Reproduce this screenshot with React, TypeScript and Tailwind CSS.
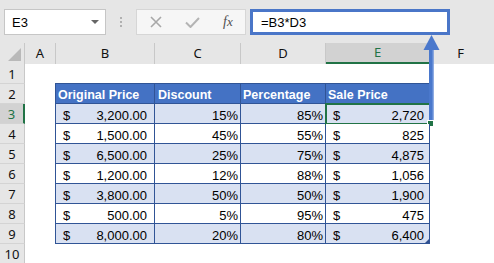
import React from "react";

const rows = [
  { o: "3,200.00", d: "15%", p: "85%", s: "2,720" },
  { o: "1,500.00", d: "45%", p: "55%", s: "825" },
  { o: "6,500.00", d: "25%", p: "75%", s: "4,875" },
  { o: "1,200.00", d: "12%", p: "88%", s: "1,056" },
  { o: "3,800.00", d: "50%", p: "50%", s: "1,900" },
  { o: "500.00", d: "5%", p: "95%", s: "475" },
  { o: "8,000.00", d: "20%", p: "80%", s: "6,400" },
];

const hdrFont = "font-['Noto_Sans','Liberation_Sans',sans-serif]";

function RowHeader({ n, active }: { n: number; active?: boolean }) {
  return (
    <div
      className={
        "w-[25px] h-full flex items-center justify-center text-[13px] font-normal border-b border-[#d4d4d4] " +
        hdrFont +
        (active
          ? " bg-[#d2d2d2] text-[#217346] border-r-2 border-r-[#217346]"
          : " bg-[#e6e6e6] text-[#111] border-r border-r-[#c8c8c8]")
      }
    >
      <span className="leading-none pt-[1px]">{n}</span>
    </div>
  );
}

export default function App() {
  return (
    <div className="w-[494px] h-[263px] overflow-hidden bg-white relative font-['Liberation_Sans',Arial,sans-serif] text-black">
      {/* top formula bar */}
      <div className="h-[43px] bg-[#e6e6e6] flex items-start pt-[9px] pl-[4px]">
        <div className="w-[102px] h-[26px] bg-white border border-[#c6c6c6] flex items-center justify-between pl-[7px] pr-[6px]">
          <span className="text-[13px] leading-none">E3</span>
          <svg width="8" height="4" viewBox="0 0 8 4">
            <polygon points="0,0 8,0 4,4" fill="#666" />
          </svg>
        </div>
        <div className="ml-[14px] mt-[8px] flex flex-col gap-[2px]">
          <div className="w-[2px] h-[2px] bg-[#b0b0b0]" />
          <div className="w-[2px] h-[2px] bg-[#b0b0b0]" />
          <div className="w-[2px] h-[2px] bg-[#b0b0b0]" />
        </div>
        <div className="ml-[14px] w-[110px] h-[26px] bg-[#f6f6f6] border border-[#d6d6d6] flex items-center">
          <svg className="ml-[13px]" width="12" height="12" viewBox="0 0 12 12">
            <path d="M1 1 L11 11 M11 1 L1 11" stroke="#a8a8a8" strokeWidth="1.6" />
          </svg>
          <svg className="ml-[23px]" width="15" height="11" viewBox="0 0 15 11">
            <path d="M1 5.5 L5.5 10 L14 1" stroke="#b4b4b4" strokeWidth="2" fill="none" />
          </svg>
          <span className="ml-[23px] text-[13px] italic text-[#505050] font-['Liberation_Serif',serif] leading-none">
            <span className="text-[14px]">f</span>x
          </span>
        </div>
        <div className="ml-[4px] w-[200px] h-[26px] bg-white border-[3px] border-[#4a76c8] flex items-center pl-[8px]">
          <span className="text-[13px] leading-none">=B3*D3</span>
        </div>
      </div>

      {/* column headers */}
      <div className={"h-[21px] flex bg-[#e6e6e6] text-[13px] text-[#111] " + hdrFont}>
        <div className="w-[25px] h-full border-r border-[#c8c8c8] flex items-end justify-end pr-[3px] pb-[3px]">
          <svg width="13" height="13" viewBox="0 0 13 13">
            <polygon points="13,0 13,13 0,13" fill="#b9b9b9" />
          </svg>
        </div>
        <div className="w-[31px] h-full border-r border-[#c8c8c8] flex items-center justify-center">A</div>
        <div className="w-[99px] h-full border-r border-[#c8c8c8] flex items-center justify-center">B</div>
        <div className="w-[86px] h-full border-r border-[#c8c8c8] flex items-center justify-center">C</div>
        <div className="w-[85px] h-full border-r border-[#c8c8c8] flex items-center justify-center">D</div>
        <div className="w-[104px] h-full bg-[#d2d2d2] border-r border-[#c8c8c8] border-b-2 border-b-[#217346] text-[#217346] flex items-center justify-center">
          E
        </div>
        <div className="flex-1 h-full flex items-center justify-center pr-[1px]">
          <span className="ml-[-2px]">F</span>
        </div>
      </div>

      {/* row 1 */}
      <div className="h-[20px] flex">
        <RowHeader n={1} />
        <div className="w-[30px]" />
        <div className="w-[100px] border-b border-[#305496]" />
        <div className="w-[86px] border-b border-[#305496]" />
        <div className="w-[85px] border-b border-[#305496]" />
        <div className="w-[104px] border-b border-[#305496]" />
        <div className="flex-1" />
      </div>

      {/* row 2: table header */}
      <div className="h-[20px] flex">
        <RowHeader n={2} />
        <div className="w-[30px]" />
        <div className="w-[100px] bg-[#4472c4] border-l border-r border-b border-[#305496] text-white font-bold text-[12.5px] flex items-end pl-[2px]">
          <span className="leading-[15px]">Original Price</span>
        </div>
        <div className="w-[86px] bg-[#4472c4] border-r border-b border-[#305496] text-white font-bold text-[12.5px] flex items-end pl-[3px]">
          <span className="leading-[15px]">Discount</span>
        </div>
        <div className="w-[85px] bg-[#4472c4] border-r border-b border-[#305496] text-white font-bold text-[12.5px] flex items-end pl-[2px]">
          <span className="leading-[15px]">Percentage</span>
        </div>
        <div className="w-[104px] bg-[#4472c4] border-r border-b border-[#305496] text-white font-bold text-[12.5px] flex items-end pl-[2px]">
          <span className="leading-[15px]">Sale Price</span>
        </div>
        <div className="flex-1" />
      </div>

      {rows.map((r, i) => {
        const band = i % 2 === 0 ? "bg-[#d9e1f2]" : "bg-white";
        const n = i + 3;
        const last = i === rows.length - 1;
        return (
          <div key={n} className="h-[20px] flex text-[13px]">
            <RowHeader n={n} active={n === 3} />
            <div className="w-[30px]" />
            <div className={"w-[100px] border-l border-r border-b border-[#305496] flex items-end justify-between pl-[7px] pr-[7px] " + band}>
              <span className="leading-[15px]">$</span>
              <span className="leading-[15px]">{r.o}</span>
            </div>
            <div className={"w-[86px] border-r border-b border-[#305496] flex items-end justify-end pr-[2px] " + band}>
              <span className="leading-[15px]">{r.d}</span>
            </div>
            <div className={"w-[85px] border-r border-b border-[#305496] flex items-end justify-end pr-[2px] " + band}>
              <span className="leading-[15px]">{r.p}</span>
            </div>
            <div className={"relative w-[104px] border-r border-b border-[#305496] flex items-end justify-between pl-[7px] pr-[5px] " + band}>
              <span className="leading-[15px]">$</span>
              <span className="leading-[15px]">{r.s}</span>
              {n === 3 && (
                <>
                  <div className="absolute left-[-1px] top-[-1px] w-[106px] h-[22px] border-2 border-[#217346]" />
                  <div className="absolute left-[101px] top-[16px] w-[7px] h-[7px] bg-[#217346] border border-white" />
                </>
              )}
              {last && (
                <svg className="absolute right-[0px] bottom-[0px]" width="4" height="4" viewBox="0 0 4 4">
                  <polygon points="4,0 4,4 0,4" fill="#2f4f8f" />
                </svg>
              )}
            </div>
            <div className="flex-1" />
          </div>
        );
      })}

      {/* row 10 */}
      <div className="h-[20px] flex">
        <RowHeader n={10} />
        <div className="flex-1" />
      </div>

      {/* annotation arrow */}
      <svg className="absolute left-0 top-0 pointer-events-none" width="494" height="263" viewBox="0 0 494 263">
        <rect x="429" y="49" width="4.5" height="71" fill="#4a78cc" />
        <rect x="432.5" y="49" width="1" height="71" fill="#7a9ee0" />
        <polygon points="431.5,35 439.5,50 423.5,50" fill="#4a78cc" />
      </svg>
    </div>
  );
}
